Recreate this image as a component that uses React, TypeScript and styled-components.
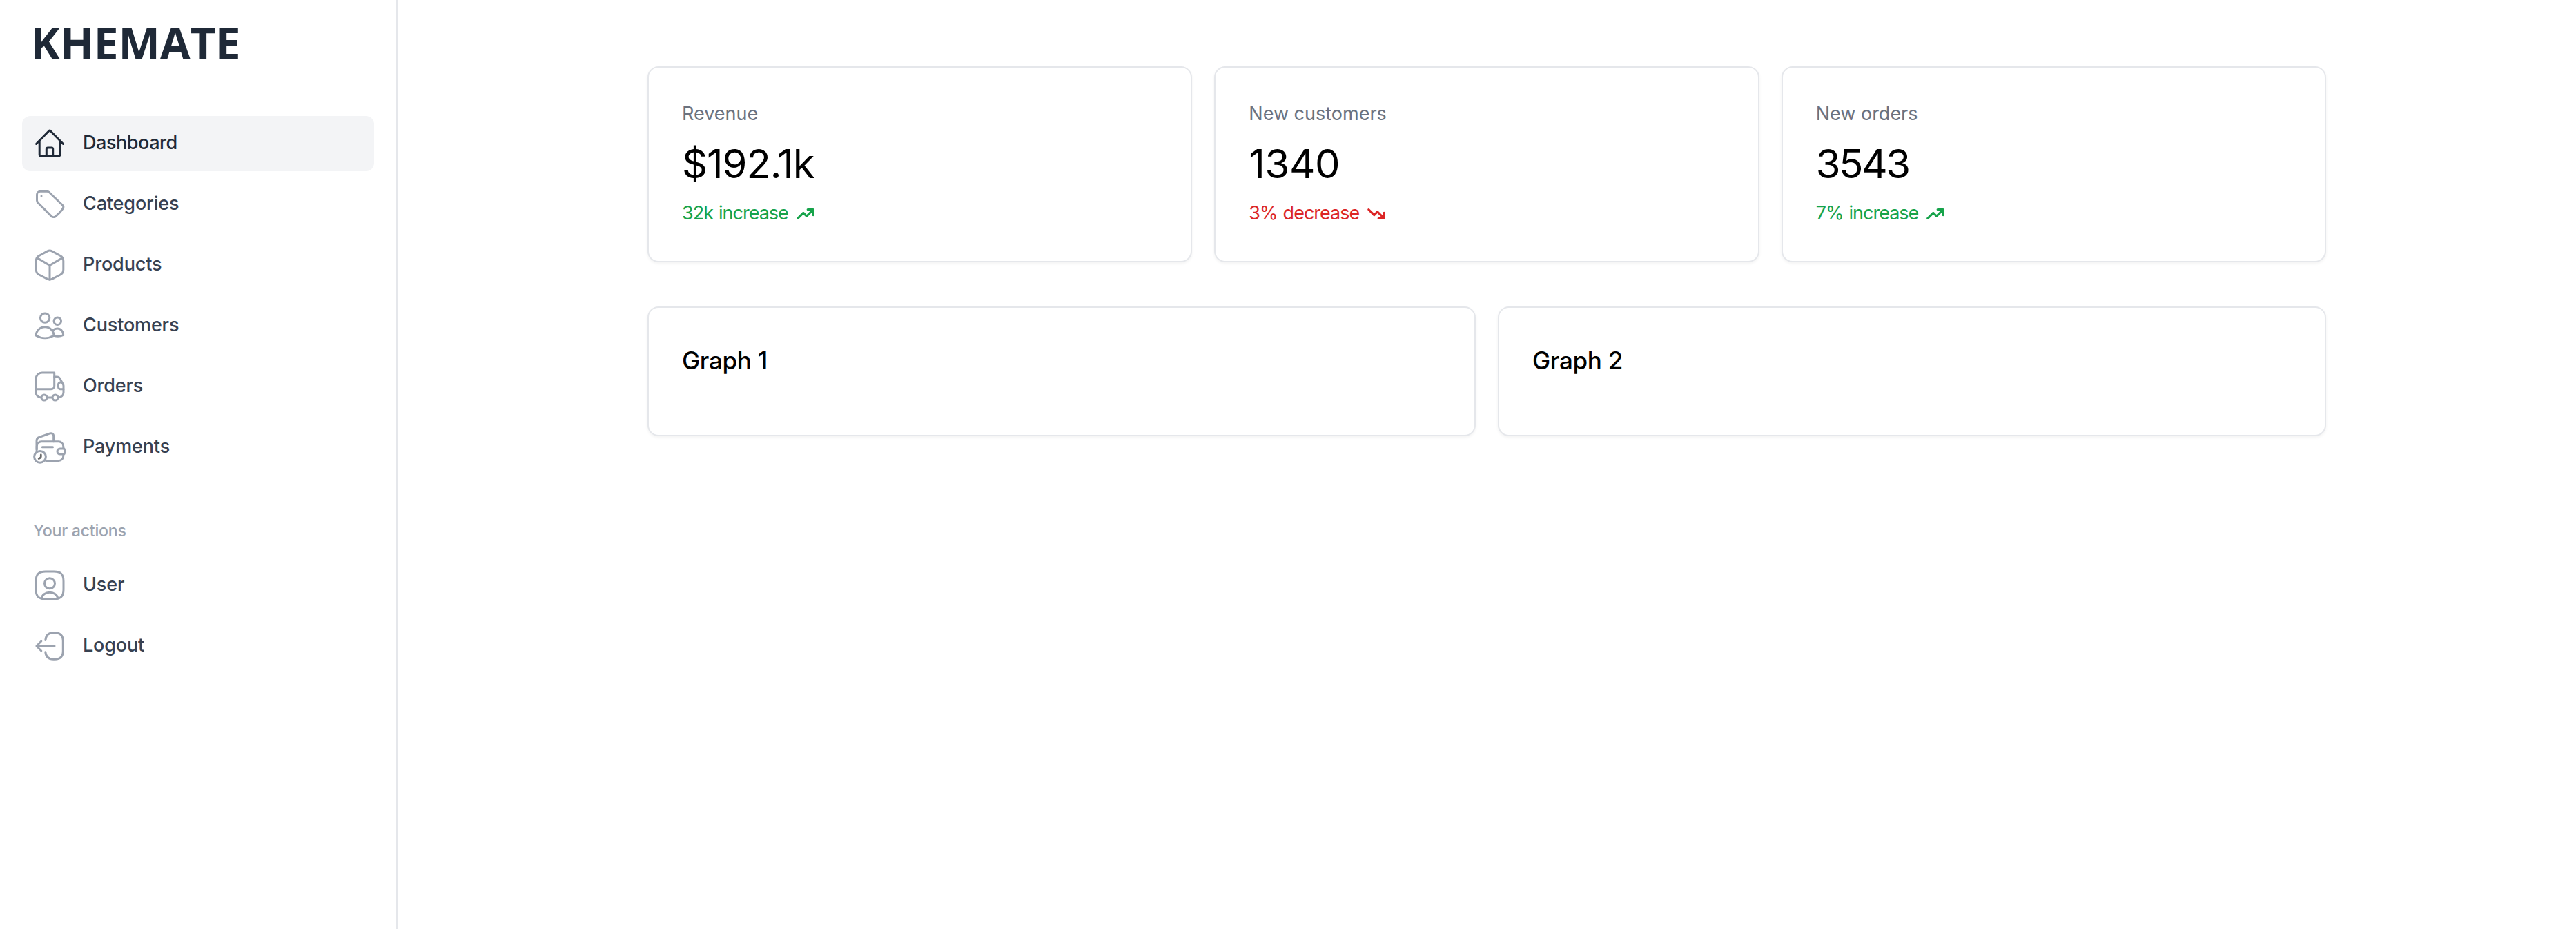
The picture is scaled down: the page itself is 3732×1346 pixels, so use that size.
import React from "react";
import styled, { createGlobalStyle } from "styled-components";
import { HiTrendingUp, HiTrendingDown } from "react-icons/hi";

const GlobalStyle = createGlobalStyle`
  *, *::before, *::after { box-sizing: border-box; }
  body {
    margin: 0;
    background: #fff;
    color: #000;
    font-family: Inter, "Liberation Sans", sans-serif;
  }
`;

const Layout = styled.div`
  display: flex;
  height: 100vh;
`;

const Sidebar = styled.aside`
  display: flex;
  flex-direction: column;
  flex: none;
  width: 576px;
  padding: 22px 32px 24px;
  border-right: 2px solid #e5e7eb;
`;

const Logo = styled.div`
  height: 80px;
  margin-bottom: 66px;
  padding-left: 12.5px;
  font: 700 64px/80px "Open Sans", "Noto Sans", sans-serif;
  letter-spacing: -0.1px;
  color: #1f2937;
`;

const NavList = styled.nav`
  display: flex;
  flex-direction: column;
  gap: 8px;
`;

const NavItem = styled.a<{ $active?: boolean }>`
  display: flex;
  align-items: center;
  gap: 24px;
  height: 80px;
  padding: 0 16px;
  border-radius: 12px;
  background: ${(p) => (p.$active ? "#f3f4f6" : "transparent")};
  color: ${(p) => (p.$active ? "#1f2937" : "#374151")};
  font-size: 27px;
  font-weight: 550;
  line-height: 40px;
  letter-spacing: ${(p) => (p.$active ? "-0.45px" : "-0.15px")};

  svg {
    flex: none;
    width: 48px;
    height: 48px;
    overflow: visible;
    color: ${(p) => (p.$active ? "#1f2937" : "#9ca3af")};
  }
`;

const NavLabel = styled.span`
  padding-bottom: 2px;
`;

const SectionTitle = styled.h2`
  margin: 65px 0 23px;
  padding-left: 16px;
  font-size: 23.2px;
  font-weight: 500;
  line-height: 32px;
  letter-spacing: -0.28px;
  color: #9ca3af;
`;

const Main = styled.main`
  flex: 1;
  padding-top: 96px;
`;

const Content = styled.div`
  display: flex;
  flex-direction: column;
  gap: 64px;
  width: 2560px;
  margin: 0 auto;
  padding: 0 64px;
`;

const CardGrid = styled.div<{ $columns: number }>`
  display: grid;
  grid-template-columns: repeat(${(p) => p.$columns}, 1fr);
  gap: 32px;
`;

const Card = styled.section<{ $height: number }>`
  height: ${(p) => p.$height}px;
  padding: 47px 48px 45px;
  border: 2px solid #e5e7eb;
  border-radius: 16px;
  background: #fff;
  box-shadow: 0 2px 4px rgba(0, 0, 0, 0.05);
`;

const StatLabel = styled.div`
  font-size: 27px;
  line-height: 40px;
  color: #6b7280;
`;

const StatValue = styled.div<{ $tracking: number }>`
  margin: 16px 0;
  font-size: 58px;
  line-height: 72px;
  letter-spacing: ${(p) => p.$tracking}px;
`;

const StatChange = styled.div<{ $rising: boolean }>`
  display: flex;
  align-items: center;
  gap: 9px;
  font-size: 27px;
  line-height: 40px;
  letter-spacing: -1px;
  word-spacing: 1.5px;
  color: ${(p) => (p.$rising ? "#16a34a" : "#dc2626")};

  svg {
    width: 32px;
    height: 32px;
    margin-top: 2px;
  }
`;

const GraphTitle = styled.h3`
  margin: 1px 0 0;
  font-size: 35px;
  font-weight: 550;
  line-height: 56px;
  letter-spacing: -0.3px;
`;

const Icon = ({ children }: { children: React.ReactNode }) => (
  <svg
    viewBox="0 0 48 48"
    fill="none"
    stroke="currentColor"
    strokeWidth="3"
    strokeLinecap="round"
    strokeLinejoin="round"
  >
    {children}
  </svg>
);

const HomeIcon = () => (
  <Icon>
    <path d="M4.5 24.5 22.8 5.8a1.7 1.7 0 0 1 2.4 0L43.5 24.5" />
    <path d="M9.2 20v20a2 2 0 0 0 2 2h25.6a2 2 0 0 0 2-2V20" />
    <path d="M19.3 42V32a2 2 0 0 1 2-2h5.4a2 2 0 0 1 2 2v10" />
  </Icon>
);

const TagIcon = () => (
  <Icon>
    <path d="M5.5 10a4.8 4.8 0 0 1 4.8-4.7H20c1.3 0 2.5.5 3.5 1.4L42.6 25.3c1.4 1.4 1.6 3.3.4 5.1-2.7 4.1-6.2 7.8-10.7 11.3-1.7 1.3-4.2 1.2-5.7-.3L7 21.8a5 5 0 0 1-1.5-3.5Z" />
    <circle cx="12" cy="12" r="1.5" fill="currentColor" stroke="none" />
  </Icon>
);

const CubeIcon = () => (
  <Icon>
    <path d="M20.8 3.9 8.6 10.5C5.7 12.1 4.2 14.5 4.2 18v12.5c0 3.5 1.5 5.9 4.4 7.5l12.2 6.3c2 1.1 4.4 1.1 6.4 0L39.4 38c2.9-1.6 4.4-4 4.4-7.5V18c0-3.5-1.5-5.9-4.4-7.5L27.2 3.9c-2-1.1-4.4-1.1-6.4 0Z" />
    <path d="M5.7 13.6 24 24.5l18.3-10.9M24 24.5V45" />
  </Icon>
);

const CustomersIcon = () => (
  <Icon>
    <circle cx="17.1" cy="12.6" r="6.7" />
    <circle cx="35.3" cy="17.2" r="5.2" />
    <path d="M4.2 38.3C4.3 31 9.9 25.8 17.1 25.8S29.9 31 30 38.3c-8 4.6-17.8 4.6-25.8 0Z" />
    <path d="M28.6 30.6c1.8-1.7 3.9-2.5 6.4-2.5 5 0 8.7 3.9 8.8 9.4-4.2 1.9-9.1 2.2-13.8.8" />
  </Icon>
);

const TruckIcon = () => (
  <Icon>
    <path d="M30.7 4H13a9 9 0 0 0-9 9v14.8h22a4.7 4.7 0 0 0 4.7-4.7Z" />
    <path d="M4 27v5.5a7.5 7.5 0 0 0 7.5 7.5M20.5 40h7M36 40h.5a7.5 7.5 0 0 0 7.5-7.5V23c0-.7-.2-1.3-.5-1.9l-4.7-8.5a5 5 0 0 0-4.4-2.6h-3.7" />
    <path d="M41 18h-1.5a3 3 0 0 0-3 3v3.8a3 3 0 0 0 3 3H44" />
    <circle cx="16" cy="40" r="4" />
    <circle cx="32" cy="40" r="4" />
  </Icon>
);

const WalletIcon = () => (
  <Icon>
    <path d="M5 28V15c0-2.6 1.2-4.6 3.6-5.5l15.9-5.6c2.6-.9 5.2.8 5.2 3.6v8.2" />
    <path d="M5.3 27V22.5a6.8 6.8 0 0 1 6.8-6.8h24.7a7 7 0 0 1 7 7v3M43.8 34.5v2a7 7 0 0 1-7 7H18.5" />
    <path d="M45 26h-6a4 4 0 0 0 0 8h4.5c1.1 0 2-.7 2-1.8v-4.4c0-1.1-.9-1.8-2-1.8" />
    <path d="M13.3 23.7h15.2" />
    <circle cx="10" cy="37.8" r="8.4" />
    <path d="M11.3 35v2.4c0 .8-.4 1.5-1 1.9L8.2 40.6" stroke="#6b6b6b" strokeWidth="2.8" />
  </Icon>
);

const UserIcon = () => (
  <Icon>
    <path d="M18 4h12c10 0 14 4 14 14v12c0 10-4 14-14 14H18C8 44 4 40 4 30V18C4 8 8 4 18 4Z" />
    <circle cx="24" cy="21.3" r="7.5" />
    <path d="M12.2 43c.6-5 5.7-8.7 11.8-8.7S35.2 38 35.8 43" />
  </Icon>
);

const LogoutIcon = () => (
  <Icon>
    <path d="M17.8 15.5C18.4 8.6 22 4.8 29.3 4.8h2.2c8.2 0 11.8 4 11.8 12.2v14c0 8.2-3.6 12.2-11.8 12.2h-2.2c-7.3 0-10.9-3.7-11.5-10.5" />
    <path d="M31 24H5M11.8 17 4.9 24l6.9 7" />
  </Icon>
);

interface NavEntry {
  label: string;
  icon: React.ComponentType;
  active?: boolean;
}

const mainLinks: NavEntry[] = [
  { label: "Dashboard", icon: HomeIcon, active: true },
  { label: "Categories", icon: TagIcon },
  { label: "Products", icon: CubeIcon },
  { label: "Customers", icon: CustomersIcon },
  { label: "Orders", icon: TruckIcon },
  { label: "Payments", icon: WalletIcon },
];

const actionLinks: NavEntry[] = [
  { label: "User", icon: UserIcon },
  { label: "Logout", icon: LogoutIcon },
];

const stats = [
  { label: "Revenue", value: "$192.1k", change: "32k increase", rising: true, tracking: -1.1 },
  { label: "New customers", value: "1340", change: "3% decrease", rising: false, tracking: -0.4 },
  { label: "New orders", value: "3543", change: "7% increase", rising: true, tracking: -2.3 },
];

const Navigation = ({ links }: { links: NavEntry[] }) => (
  <NavList>
    {links.map(({ label, icon: Glyph, active }) => (
      <NavItem key={label} $active={active}>
        <Glyph />
        <NavLabel>{label}</NavLabel>
      </NavItem>
    ))}
  </NavList>
);

export default function App() {
  return (
    <>
      <GlobalStyle />
      <Layout>
        <Sidebar>
          <Logo>KHEMATE</Logo>
          <Navigation links={mainLinks} />
          <SectionTitle>Your actions</SectionTitle>
          <Navigation links={actionLinks} />
        </Sidebar>
        <Main>
          <Content>
            <CardGrid $columns={3}>
              {stats.map((s) => (
                <Card key={s.label} $height={284}>
                  <StatLabel>{s.label}</StatLabel>
                  <StatValue $tracking={s.tracking}>{s.value}</StatValue>
                  <StatChange $rising={s.rising}>
                    {s.change}
                    {s.rising ? <HiTrendingUp /> : <HiTrendingDown />}
                  </StatChange>
                </Card>
              ))}
            </CardGrid>
            <CardGrid $columns={2}>
              <Card $height={188}>
                <GraphTitle>Graph 1</GraphTitle>
              </Card>
              <Card $height={188}>
                <GraphTitle>Graph 2</GraphTitle>
              </Card>
            </CardGrid>
          </Content>
        </Main>
      </Layout>
    </>
  );
}
